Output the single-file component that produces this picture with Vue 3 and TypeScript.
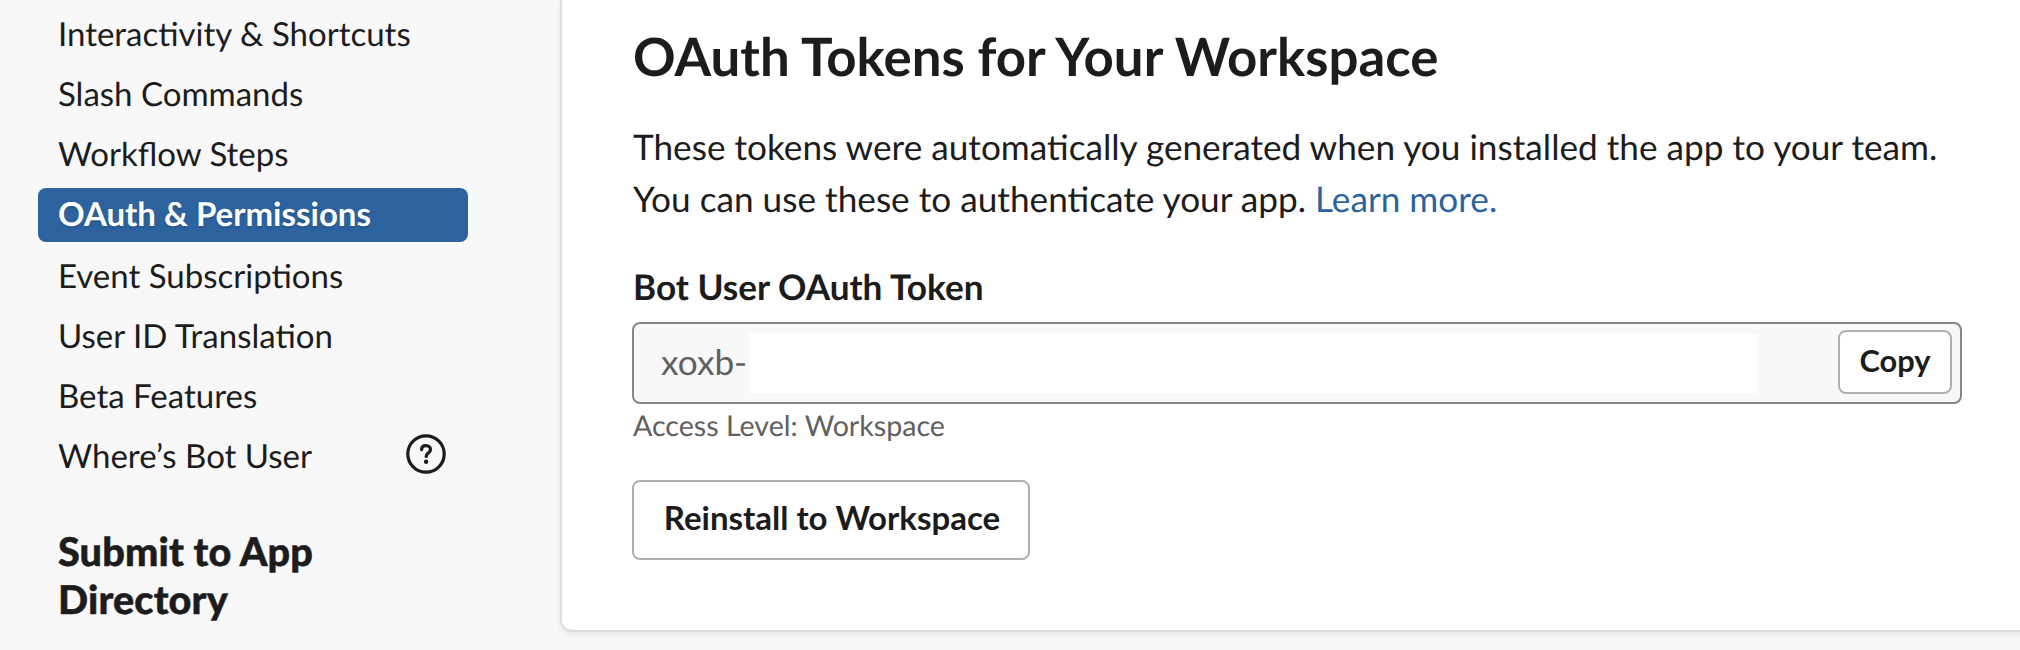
<script setup lang="ts">
interface NavItem {
  label: string
  active?: boolean
  help?: boolean
}

const navItems: NavItem[] = [
  { label: 'Interactivity & Shortcuts' },
  { label: 'Slash Commands' },
  { label: 'Workflow Steps' },
  { label: 'OAuth & Permissions', active: true },
  { label: 'Event Subscriptions' },
  { label: 'User ID Translation' },
  { label: 'Beta Features' },
  { label: 'Where’s Bot User', help: true },
]
</script>

<template>
  <div class="page">
    <aside class="sidebar">
      <nav class="nav">
        <a
          v-for="item in navItems"
          :key="item.label"
          class="nav-item"
          :class="{ active: item.active }"
        >
          <span>{{ item.label }}</span>
          <svg v-if="item.help" class="help" width="40" height="40" viewBox="0 0 40 40" fill="none">
            <circle cx="20" cy="20" r="18.2" stroke="#1d1c1d" stroke-width="3.2" />
            <path
              d="M15.6 15.6c0-2.6 1.9-4 4.4-4s4.5 1.6 4.5 4c0 3.4-4.3 3.5-4.3 6.8"
              stroke="#1d1c1d"
              stroke-width="3.3"
              stroke-linecap="round"
            />
            <circle cx="20.1" cy="27.8" r="2.2" fill="#1d1c1d" />
          </svg>
        </a>
      </nav>
      <h3 class="group-title">Submit to App Directory</h3>
    </aside>

    <main class="card">
      <h1 class="title">OAuth Tokens for Your Workspace</h1>
      <p class="intro">
        <span>These tokens were automatically generated when you installed the app to your team.</span>
        <span>You can use these to authenticate your app. <a class="link">Learn more.</a></span>
      </p>
      <div class="label">Bot User OAuth Token</div>
      <div class="token">
        <span class="token-text">xoxb-</span>
        <span class="token-mask"></span>
        <button class="btn copy" type="button">Copy</button>
      </div>
      <div class="hint">Access Level: Workspace</div>
      <button class="btn reinstall" type="button">Reinstall to Workspace</button>
    </main>
  </div>
</template>

<style>
body {
  margin: 0;
  background: #f8f8f8;
  overflow: hidden;
}
</style>

<style scoped>
.page {
  display: flex;
  align-items: flex-start;
  width: 2020px;
  height: 650px;
  overflow: hidden;
  background: #f8f8f8;
  color: #1d1c1d;
  font-family: Lato, 'Liberation Sans', sans-serif;
  text-rendering: geometricPrecision;
}
.sidebar {
  box-sizing: border-box;
  flex: none;
  width: 560px;
  padding: 8px 92px 0 38px;
}
.nav-item {
  display: flex;
  align-items: center;
  justify-content: space-between;
  box-sizing: border-box;
  height: 54px;
  margin-bottom: 6px;
  padding: 0 22px 2px 20px;
  border-radius: 8px;
  font-size: 33px;
  line-height: 50px;
  white-space: nowrap;
}
.nav-item.active {
  margin-bottom: 8px;
  background: #2c639e;
  color: #fff;
  font-weight: 700;
  text-shadow: 0 2px 2px rgba(0, 0, 0, 0.15);
}
.help {
  flex: none;
  margin-bottom: 4px;
}
.group-title {
  width: 340px;
  margin: 44px 0 0 20px;
  font-size: 39.6px;
  font-weight: 900;
  line-height: 48px;
  letter-spacing: 0.15px;
  -webkit-text-stroke: 0.5px #1d1c1d;
}
.card {
  box-sizing: border-box;
  flex: none;
  width: 1500px;
  height: 632px;
  padding: 25px 96px 0 71px;
  border: 2px solid #dddddd;
  border-top: 0;
  border-radius: 0 0 12px 12px;
  background: #fff;
  box-shadow: 0 2px 6px rgba(0, 0, 0, 0.08);
}
.title {
  margin: 0;
  font-size: 52.8px;
  font-weight: 700;
  line-height: 64px;
}
.intro {
  display: flex;
  flex-direction: column;
  margin: 32px 0 0;
  font-size: 35.2px;
  line-height: 52px;
  white-space: nowrap;
}
.link {
  color: #2c639e;
}
.label {
  margin-top: 36px;
  font-size: 35.2px;
  font-weight: 700;
  line-height: 52px;
}
.token {
  display: flex;
  align-items: center;
  box-sizing: border-box;
  width: 1330px;
  height: 82px;
  margin-top: 9px;
  margin-left: -1px;
  padding: 0 8px 0 27px;
  border: 2px solid #868686;
  border-radius: 8px;
  background: #f8f8f8;
}
.token-text {
  flex: none;
  width: 88px;
  padding-bottom: 3px;
  color: #616061;
  font-size: 35.2px;
  line-height: 52px;
  white-space: nowrap;
}
.token-mask {
  flex: none;
  width: 1009px;
  height: 59px;
  background: #fff;
}
.btn {
  box-sizing: border-box;
  border: 2px solid #b0b0b0;
  border-radius: 8px;
  background: #fff;
  color: #1d1c1d;
  font-family: inherit;
  font-weight: 700;
  white-space: nowrap;
}
.copy {
  width: 114px;
  height: 64px;
  margin-left: auto;
  margin-bottom: 2px;
  padding: 0 0 3px;
  font-size: 30.8px;
}
.hint {
  margin-top: 4px;
  color: #616061;
  font-size: 28.6px;
  line-height: 36px;
}
.reinstall {
  display: block;
  width: 398px;
  height: 80px;
  margin-top: 36px;
  margin-left: -1px;
  padding: 0 0 6px 2px;
  font-size: 33px;
}
</style>
